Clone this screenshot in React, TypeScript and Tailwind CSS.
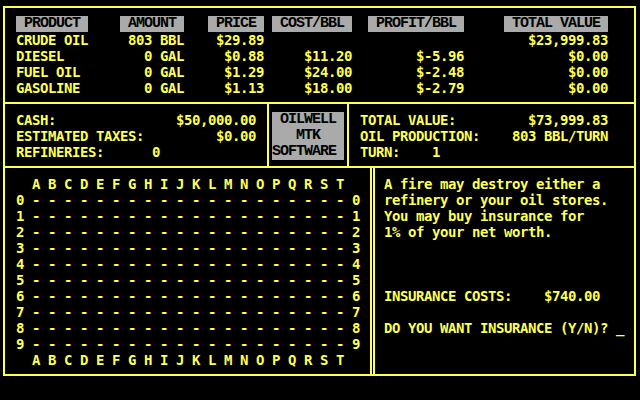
const mono = "font-['DejaVu_Sans_Mono',monospace] font-bold text-[14px] tracking-[-0.4287px] leading-[16px]";
const plate = "bg-[#aaaaaa] text-black font-['Liberation_Mono',monospace] font-bold text-[15px] tracking-[-1px]";

const columns = [
  { head: "PRODUCT", box: "w-[72px]", align: "text-left" },
  { head: "AMOUNT", box: "w-[64px] ml-[32px]", align: "text-right" },
  { head: "PRICE", box: "w-[56px] ml-[24px]", align: "text-right" },
  { head: "COST/BBL", box: "w-[80px] ml-[8px]", align: "text-right" },
  { head: "PROFIT/BBL", box: "w-[96px] ml-[16px]", align: "text-right" },
  { head: "TOTAL VALUE", box: "w-[104px] ml-[40px]", align: "text-right" },
];

const products = [
  ["CRUDE OIL", "803 BBL", "$29.89", "", "", "$23,999.83"],
  ["DIESEL", "0 GAL", "$0.88", "$11.20", "$-5.96", "$0.00"],
  ["FUEL OIL", "0 GAL", "$1.29", "$24.00", "$-2.48", "$0.00"],
  ["GASOLINE", "0 GAL", "$1.13", "$18.00", "$-2.79", "$0.00"],
];

const letters = "A B C D E F G H I J K L M N O P Q R S T";
const dashes = Array(20).fill("-").join(" ");

const HLine = () => <div className="h-[2px] shrink-0 bg-[#ffff55]" />;
const VLine = () => <div className="w-[2px] shrink-0 bg-[#ffff55]" />;

const PriceTable = () => (
  <div className="h-[94px] shrink-0 pt-[8px] pl-[11px]">
    <div className="flex h-[16px]">
      {columns.map((c) => (
        <div key={c.head} className={`${c.box} ${plate} text-center`}>
          {c.head}
        </div>
      ))}
    </div>
    {products.map((row) => (
      <div key={row[0]} className="flex h-[16px]">
        {row.map((cell, i) => (
          <div key={i} className={`${columns[i].box} ${columns[i].align} whitespace-pre`}>
            {cell}
          </div>
        ))}
      </div>
    ))}
  </div>
);

const StatusBar = () => (
  <div className="flex h-[62px] shrink-0">
    <div className="w-[262px] shrink-0 pt-[8px] pl-[11px]">
      <div className="flex w-[240px] justify-between">
        <span>CASH:</span>
        <span>$50,000.00</span>
      </div>
      <div className="flex w-[240px] justify-between">
        <span>ESTIMATED TAXES:</span>
        <span>$0.00</span>
      </div>
      <div className="whitespace-pre">{"REFINERIES:      0"}</div>
    </div>
    <VLine />
    <div className="w-[78px] shrink-0 pt-[8px] pl-[3px]">
      <div className={`w-[72px] h-[48px] ${plate} whitespace-pre`}>
        <div>{" OILWELL"}</div>
        <div>{"   MTK"}</div>
        <div>{"SOFTWARE"}</div>
      </div>
    </div>
    <VLine />
    <div className="flex-1 pt-[8px] pl-[11px]">
      <div className="flex w-[248px] justify-between">
        <span>TOTAL VALUE:</span>
        <span>$73,999.83</span>
      </div>
      <div className="flex w-[248px] justify-between">
        <span>OIL PRODUCTION:</span>
        <span>803 BBL/TURN</span>
      </div>
      <div className="whitespace-pre">{"TURN:    1"}</div>
    </div>
  </div>
);

const LeaseMap = () => (
  <div className="w-[365px] shrink-0 pt-[8px] pl-[11px] whitespace-pre">
    <div>{"  " + letters}</div>
    {Array.from({ length: 10 }, (_, d) => (
      <div key={d}>{`${d} ${dashes} ${d}`}</div>
    ))}
    <div>{"  " + letters}</div>
  </div>
);

const Prompt = () => (
  <div className="flex-1 pt-[8px] pl-[9px] whitespace-pre">
    <div>A fire may destroy either a</div>
    <div>refinery or your oil stores.</div>
    <div>You may buy insurance for</div>
    <div>1% of your net worth.</div>
    <div className="h-[48px]" />
    <div>{"INSURANCE COSTS:    $740.00"}</div>
    <div className="h-[16px]" />
    <div>{"DO YOU WANT INSURANCE (Y/N)? _"}</div>
  </div>
);

export default function App() {
  return (
    <div className={`w-[640px] h-[400px] bg-black pt-[6px] pl-[3px] text-[#ffff55] ${mono}`}>
      <div className="w-[633px] h-[370px] border-2 border-[#ffff55] flex flex-col">
        <PriceTable />
        <HLine />
        <StatusBar />
        <HLine />
        <div className="flex flex-1">
          <LeaseMap />
          <VLine />
          <div className="w-[1px] shrink-0" />
          <VLine />
          <Prompt />
        </div>
      </div>
    </div>
  );
}
